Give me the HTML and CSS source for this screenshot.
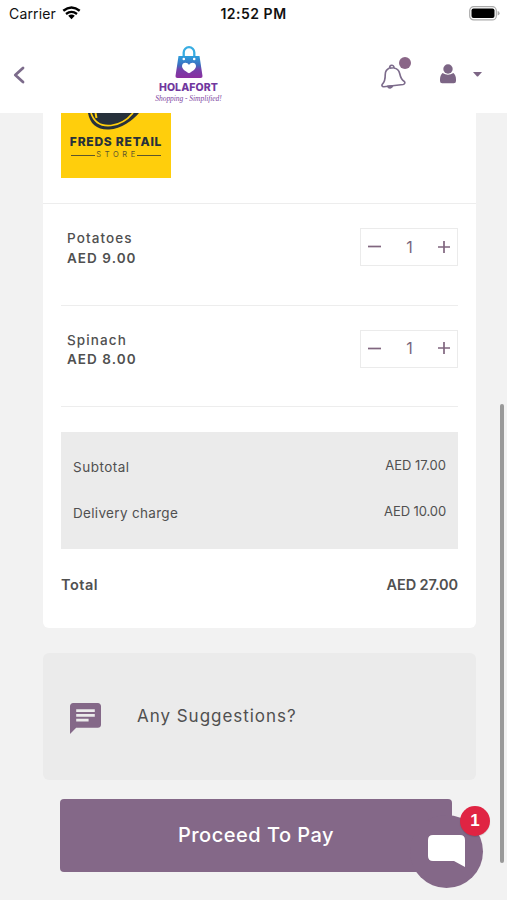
FILE: index.html
```html
<!DOCTYPE html>
<html lang="en">
<head>
<meta charset="utf-8">
<title>Holafort – Cart</title>
<link rel="stylesheet" href="styles.css">
</head>
<body>
<header class="header">
  <div class="status">
    <div class="carrier"><span class="carrier-name">Carrier</span>
      <svg width="19" height="14" viewBox="0 0 19 14" fill="none" stroke="#000"><path d="M1.300 4.800Q9.500-1.800 17.700 4.800" stroke-width="2.400"/><path d="M4 8Q9.500 3.700 15 8" stroke-width="2.300"/><path d="M6.200 9.800Q9.500 7.200 12.800 9.800L9.500 13.300Z" fill="#000" stroke="none"/></svg>
    </div>
    <div class="clock">12:52 PM</div>
    <svg class="battery" width="31" height="15" viewBox="0 0 31 15"><rect x=".7" y=".7" width="26.600" height="13.200" rx="4" fill="#fff" stroke="#aaa" stroke-width="1.200"/><rect x="2.500" y="2.500" width="23" height="9.600" rx="2" fill="#000"/><path d="M28.600 5q2 .5 2 2.300t-2 2.300Z" fill="#aaa"/></svg>
  </div>
  <nav class="nav">
    <svg class="back" width="12" height="18" viewBox="0 0 12 18" fill="none" stroke="#7c6b8b" stroke-width="2.800" stroke-linecap="round" stroke-linejoin="round"><path d="M10 2 2.300 9 10 16"/></svg>
    <div class="brand">
      <svg width="28" height="33" viewBox="0 0 28 33">
        <defs><linearGradient id="bag" x1="0" y1="0" x2="0" y2="1"><stop offset="0" stop-color="#2e9fdc"/><stop offset=".4" stop-color="#3b6fc0"/><stop offset=".62" stop-color="#7440a8"/><stop offset="1" stop-color="#8b2fa0"/></linearGradient></defs>
        <path d="M8.700 12V6.500a5.300 5.300 0 0 1 10.600 0V12" fill="none" stroke="#38ade2" stroke-width="2.300"/>
        <path d="M3.500 10h21L27.500 30q.3 2-2 2h-23q-2.300 0-2-2Z" fill="url(#bag)"/>
        <circle cx="8.800" cy="13" r="1.300" fill="#fff"/><circle cx="19.200" cy="13" r="1.300" fill="#fff"/>
        <path d="M14 27.300C10 25 7 23 7 20c0-4 5.300-4.500 7-1 1.700-3.500 7-3 7 1 0 3-3 5-7 7.300Z" fill="#fff"/>
      </svg>
      <div class="brand-name">HOLAFORT</div>
      <div class="brand-tag">Shopping - Simplified!</div>
    </div>
    <div class="actions">
      <div class="bell">
        <svg width="26" height="27" viewBox="0 0 27 28" fill="none" stroke="#7c6b8b" stroke-width="1.700" stroke-linejoin="round"><path d="M9 4.200C5.500 5.500 4.400 8 4.400 11c0 5-.4 7.500-2.700 9.500-1.400 1.400-.6 3.300 1.300 3.100l20-2.300c1.900-.3 2.400-2.400.9-3.400-2.900-1.700-3.600-4-4.500-8-.7-3.400-2.700-5.400-6-5.800"/><path d="M9 4.200c-.2-3.500 4.200-4.200 4.600-.3M9 4.200l4.600-.3"/><path d="M7 23.200c1 2.300 4.300 2 5-.6Z" fill="#7c6b8b"/></svg>
        <span class="dot"></span>
      </div>
      <svg class="user" width="16" height="20" viewBox="0 0 16 20" fill="#7c6585"><circle cx="8" cy="5" r="4.700"/><path d="M2.600 9Q8 12.500 13.400 9 16 11 16 15.500v1.500q0 2.200-2.200 2.200H2.200Q0 19.200 0 17v-1.500Q0 11 2.600 9Z"/></svg>
      <svg class="caret" width="9" height="5" viewBox="0 0 9 5" fill="#7c6585"><path d="M0 0H9L5 4.600H4Z"/></svg>
    </div>
  </nav>
</header>
<main class="page">
  <section class="card">
    <div class="store">
      <div class="store-logo">
        <svg width="110" height="20" viewBox="0 0 110 20"><path d="M27 0C29 11 36 17 48 16.500 60 16 72 7 78 0Z" fill="#27313b"/><path d="M30 0C33 9 40 13.500 50 12.500 60 11.500 67 6 72 0" fill="none" stroke="#ffce0c" stroke-width="1.700"/><path d="M34.500 0l1 5" stroke="#ffce0c" stroke-width="2"/></svg>
        <div class="store-name">FREDS RETAIL</div>
        <div class="store-sub"><i></i><span>STORE</span><i></i></div>
      </div>
    </div>
    <div class="items">
      <div class="item">
        <div class="item-text"><div>Potatoes</div><div class="price">AED 9.00</div></div>
        <div class="stepper"><svg width="13" height="13" viewBox="0 0 13 13"><path d="M0 6.500H13"/></svg><span>1</span><svg width="12" height="12" viewBox="0 0 12 12"><path d="M0 6H12M6 0V12"/></svg></div>
      </div>
      <div class="item">
        <div class="item-text"><div>Spinach</div><div class="price">AED 8.00</div></div>
        <div class="stepper"><svg width="13" height="13" viewBox="0 0 13 13"><path d="M0 6.500H13"/></svg><span>1</span><svg width="12" height="12" viewBox="0 0 12 12"><path d="M0 6H12M6 0V12"/></svg></div>
      </div>
    </div>
    <div class="summary">
      <div class="line"><span class="label">Subtotal</span><span class="amount">AED 17.00</span></div>
      <div class="line"><span class="label">Delivery charge</span><span class="amount amount-wide">AED 10.00</span></div>
    </div>
    <div class="total"><span class="total-label">Total</span><span class="total-amount">AED 27.00</span></div>
  </section>
  <section class="suggest">
    <svg width="31" height="31" viewBox="2 2 20 20" fill="#846888"><path d="M20 2H4c-1.100 0-2 .9-2 2v18l4-4h14c1.100 0 2-.9 2-2V4c0-1.100-.9-2-2-2zM6 6h12v1.800H6V6zm0 3.100h12v1.800H6V9.100zM14 14H6v-1.800h8v1.800z"/></svg>
    <span>Any Suggestions?</span>
  </section>
  <button class="pay">Proceed To Pay</button>
</main>
<div class="chat">
  <svg width="37" height="33" viewBox="0 0 37 33" fill="#fff"><path d="M5 0H32Q37 0 37 5V32L26 26H5Q0 26 0 21V5Q0 0 5 0Z"/></svg>
  <span class="badge">1</span>
</div>
<div class="scrollbar"></div>
</body>
</html>
```

FILE: styles.css
```css
* { box-sizing: border-box; }
body { margin: 0; width: 507px; height: 900px; overflow: hidden; position: relative; background: #f2f2f2; font-family: Inter, "Liberation Sans", sans-serif; color: #505050; }
svg { display: block; flex: none; }
.header { height: 113px; background: #fff; }
.status { height: 28px; padding: 0 7px 0 9px; display: grid; grid-template-columns: 1fr auto 1fr; align-items: center; color: #111; font-size: 14px; line-height: 28px; }
.carrier { display: flex; align-items: center; gap: 6px; }
.carrier svg { margin-top: -2px; }
.carrier-name { letter-spacing: .15px; }
.clock { font-weight: 600; font-size: 14px; letter-spacing: .5px; margin-left: -4px; margin-right: -2px; }
.battery { justify-self: end; margin-top: -2px; }
.nav { height: 85px; display: grid; grid-template-columns: 155px 67px 1fr; }
.back { margin: 38px 0 0 13px; }
.brand { padding-top: 18px; display: flex; flex-direction: column; align-items: center; white-space: nowrap; }
.brand-name { margin-top: 2px; font: 800 10.500px/13px Inter, sans-serif; letter-spacing: .1px; color: #71389e; }
.brand-tag { font: italic 7.500px/9px "Liberation Serif", serif; letter-spacing: -.05px; color: #7e459f; }
.actions { display: flex; align-items: flex-start; padding-left: 159px; }
.bell { position: relative; padding-top: 36px; }
.dot { position: absolute; left: 18px; top: 29px; width: 12px; height: 12px; border-radius: 50%; background: #8a6687; }
.user { margin: 36px 0 0 33px; }
.caret { margin: 44px 0 0 17px; }
.page { padding: 0 31px 0 43px; }
.card { height: 515px; background: #fff; border-radius: 0 0 6px 6px; }
.store { height: 91px; padding-left: 18px; border-bottom: 1px solid #ededed; }
.store-logo { width: 110px; height: 65px; background: #ffce0c; color: #27313b; text-align: center; white-space: nowrap; }
.store-name { font: 800 12px/18px Inter, sans-serif; letter-spacing: .75px; }
.store-sub { display: flex; align-items: center; justify-content: center; font-size: 7.500px; line-height: 8px; color: #5c562c; }
.store-sub i { width: 24px; height: 1px; background: #5c562c; }
.store-sub span { letter-spacing: 3.600px; padding-left: 1px; margin-right: -2px; }
.items { margin: 0 18px; }
.item { height: 101.500px; border-bottom: 1px solid #ededed; display: flex; justify-content: space-between; padding-top: 24px; }
.item-text { padding: 1px 0 0 6px; font-size: 13.500px; line-height: 19.500px; font-weight: 500; letter-spacing: 1.100px; }
.price { letter-spacing: 1.050px; font-weight: 600; }
.stepper { width: 98px; height: 38px; border: 1px solid #ebebeb; display: flex; align-items: center; justify-content: space-between; padding: 0 7px 1px; color: #79667c; font-size: 16px; }
.stepper svg { stroke: #80667f; stroke-width: 1.700; }
.summary { margin: 25px 18px 0; height: 117px; background: #ebebeb; padding: 12px 12px 0; font-size: 13.500px; }
.line { height: 46px; line-height: 46px; display: flex; justify-content: space-between; }
.label { letter-spacing: .32px; }
.line:first-child .label { letter-spacing: .5px; }
.amount { line-height: 42px; font-size: 13px; letter-spacing: .02px; }
.amount-wide { letter-spacing: -.1px; }
.total { margin: 24px 18px 0; display: flex; justify-content: space-between; font-size: 14.500px; line-height: 24px; font-weight: 600; }
.total-label { letter-spacing: .5px; }
.total-amount { letter-spacing: -.1px; }
.suggest { margin-top: 25px; height: 127px; border-radius: 6px; background: #ebebeb; display: flex; align-items: center; padding: 4px 0 0 27px; gap: 36px; font-size: 17px; letter-spacing: .97px; }
.suggest span { margin-top: -6px; }
.pay { display: block; width: 392px; height: 73px; margin: 19px 0 0 17px; padding: 0; border: 0; border-radius: 4px; background: #846888; color: #fff; font: 500 20px/73px Inter, sans-serif; letter-spacing: .5px; }
.chat { position: absolute; left: 410px; top: 815px; width: 73px; height: 73px; border-radius: 50%; background: #846888; display: flex; align-items: center; justify-content: center; }
.badge { position: absolute; left: 50px; top: -9px; width: 30px; height: 30px; border-radius: 50%; background: #e02443; color: #fff; font: bold 17px/30px "Liberation Sans", sans-serif; text-align: center; box-shadow: 0 1px 1px #0002; }
.scrollbar { position: absolute; left: 500px; top: 404px; width: 3.500px; height: 459px; border-radius: 2px; background: #999; }
```
